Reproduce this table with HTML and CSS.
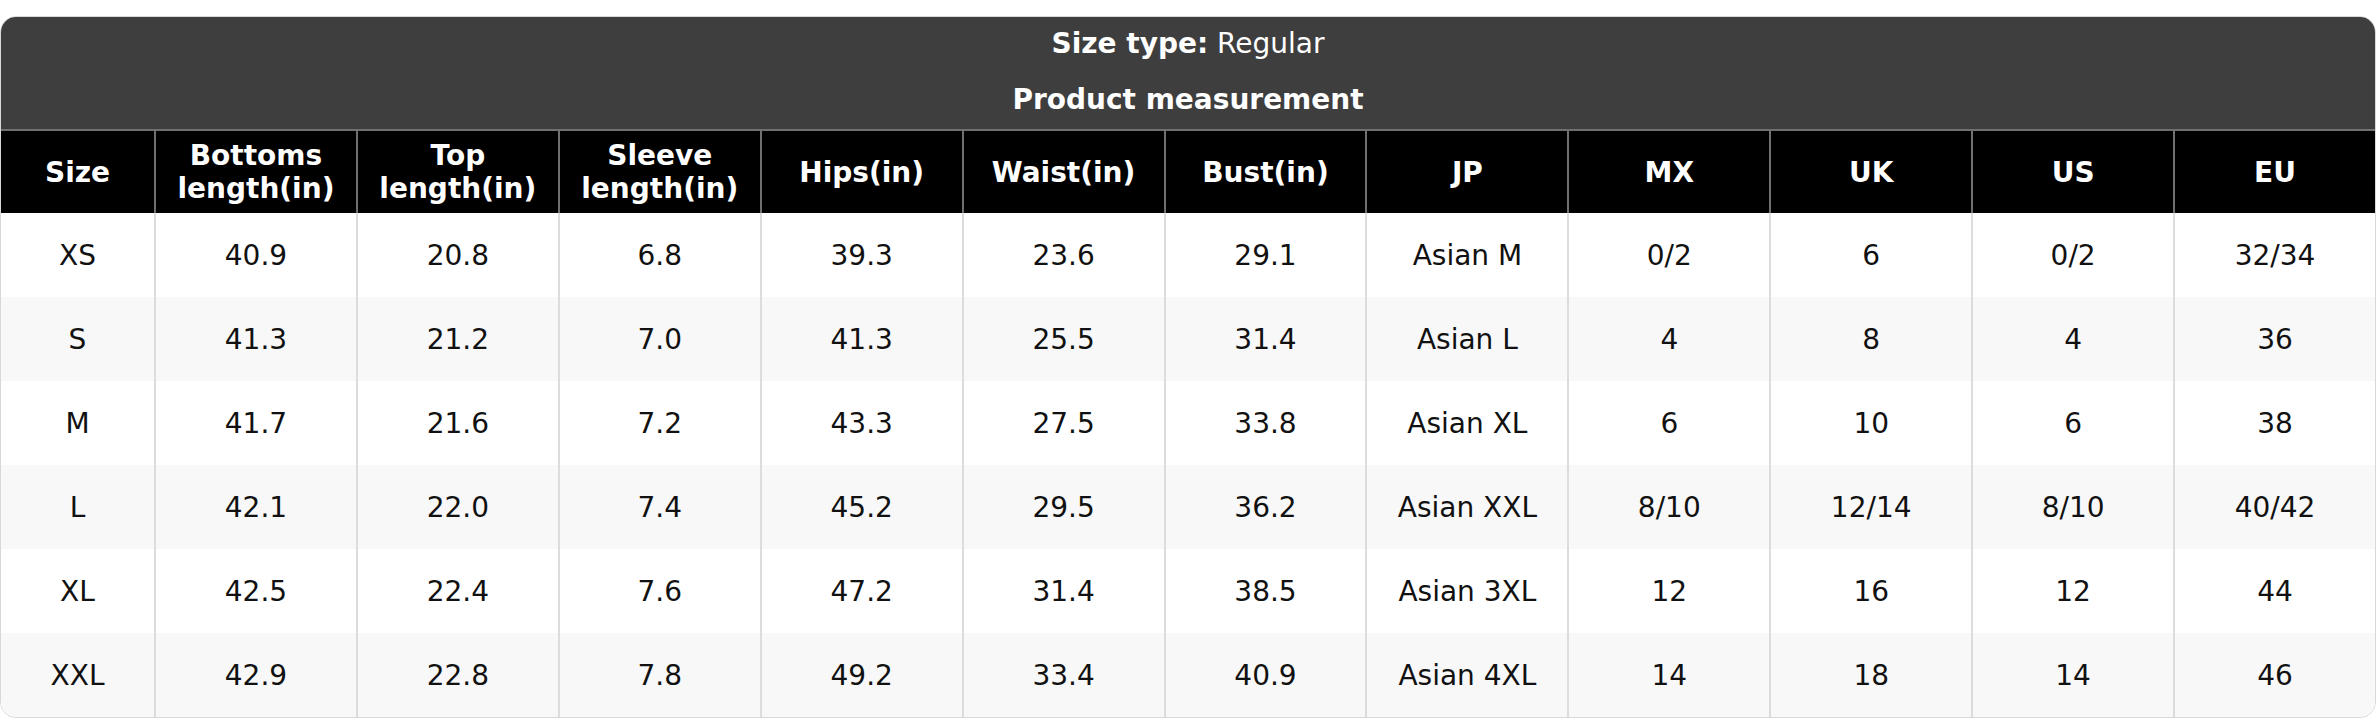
FILE: index.html
```html
<!DOCTYPE html>
<html lang="en">
<head>
<meta charset="utf-8">
<title>Size chart</title>
<link rel="stylesheet" href="styles.css">
</head>
<body>
<div class="chart">
  <div class="title">
    <div class="title-line"><b>Size type:</b> Regular</div>
    <div class="title-line strong">Product measurement</div>
  </div>
  <table class="grid">
    <colgroup>
      <col class="col-first">
      <col><col><col><col><col><col><col><col><col><col><col>
    </colgroup>
    <thead>
      <tr>
        <th>Size</th>
        <th>Bottoms<br>length(in)</th>
        <th>Top<br>length(in)</th>
        <th>Sleeve<br>length(in)</th>
        <th>Hips(in)</th>
        <th>Waist(in)</th>
        <th>Bust(in)</th>
        <th>JP</th>
        <th>MX</th>
        <th>UK</th>
        <th>US</th>
        <th>EU</th>
      </tr>
    </thead>
    <tbody>
      <tr><td>XS</td><td>40.9</td><td>20.8</td><td>6.8</td><td>39.3</td><td>23.6</td><td>29.1</td><td>Asian M</td><td>0/2</td><td>6</td><td>0/2</td><td>32/34</td></tr>
      <tr><td>S</td><td>41.3</td><td>21.2</td><td>7.0</td><td>41.3</td><td>25.5</td><td>31.4</td><td>Asian L</td><td>4</td><td>8</td><td>4</td><td>36</td></tr>
      <tr><td>M</td><td>41.7</td><td>21.6</td><td>7.2</td><td>43.3</td><td>27.5</td><td>33.8</td><td>Asian XL</td><td>6</td><td>10</td><td>6</td><td>38</td></tr>
      <tr><td>L</td><td>42.1</td><td>22.0</td><td>7.4</td><td>45.2</td><td>29.5</td><td>36.2</td><td>Asian XXL</td><td>8/10</td><td>12/14</td><td>8/10</td><td>40/42</td></tr>
      <tr><td>XL</td><td>42.5</td><td>22.4</td><td>7.6</td><td>47.2</td><td>31.4</td><td>38.5</td><td>Asian 3XL</td><td>12</td><td>16</td><td>12</td><td>44</td></tr>
      <tr><td>XXL</td><td>42.9</td><td>22.8</td><td>7.8</td><td>49.2</td><td>33.4</td><td>40.9</td><td>Asian 4XL</td><td>14</td><td>18</td><td>14</td><td>46</td></tr>
    </tbody>
  </table>
</div>
</body>
</html>
```
FILE: styles.css
```css
html, body {
  margin: 0;
  padding: 0;
  background: #ffffff;
}

body {
  padding-top: 16px;
  font-family: "DejaVu Sans", "Liberation Sans", sans-serif;
  font-size: 28px;
  color: #000;
}

.chart {
  width: 2376px;
  box-sizing: border-box;
  border: 1px solid #d8d8d8;
  border-radius: 16px;
  overflow: hidden;
  background: #fff;
}

.title {
  background: #3e3e3e;
  color: #fff;
  text-align: center;
}

.title-line {
  height: 56px;
  box-sizing: border-box;
  padding-bottom: 3px;
  line-height: 53px;
  font-weight: normal;
}

.title-line b {
  font-weight: bold;
}

.title-line.strong {
  font-weight: bold;
}

.grid {
  width: 100%;
  table-layout: fixed;
  border-collapse: separate;
  border-spacing: 0;
}

.col-first {
  width: 153px;
}

.grid th {
  background: #000;
  color: #fff;
  font-weight: bold;
  height: 84px;
  padding: 0 6px;
  box-sizing: border-box;
  border-top: 2px solid #707070;
  border-left: 2px solid #707070;
  line-height: 33px;
  text-align: center;
  vertical-align: middle;
}

.grid td {
  height: 84px;
  padding: 0 6px;
  box-sizing: border-box;
  border-left: 2px solid #dcdcdc;
  text-align: center;
  vertical-align: middle;
  color: #111;
}

.grid th:first-child,
.grid td:first-child {
  border-left: none;
}

.grid tbody tr:nth-child(even) td {
  background: #f8f8f8;
}
```
